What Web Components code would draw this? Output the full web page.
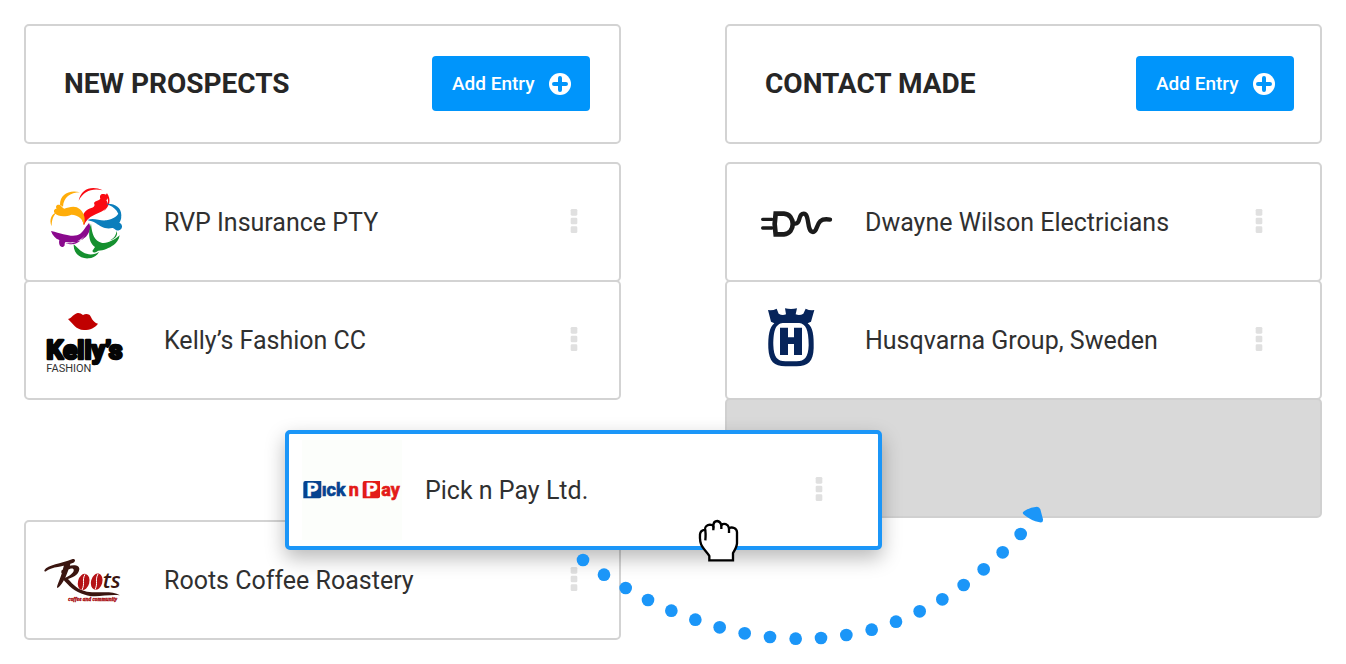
<!DOCTYPE html>
<html lang="en">
<head>
<meta charset="utf-8">
<meta name="viewport" content="width=device-width, initial-scale=1">
<title>Sales pipeline</title>
<style>
  body { margin: 0; background: #fff; color: #2b2b2b; font-family: Roboto, "Liberation Sans", sans-serif; }
</style>
</head>
<body>
<pipeline-board>
  <pipeline-column heading="New Prospects" class="first">
    <prospect-card name="RVP Insurance PTY" logo="rvp"></prospect-card>
    <prospect-card name="Kelly’s Fashion CC" logo="kellys"></prospect-card>
    <card-gap></card-gap>
    <prospect-card name="Roots Coffee Roastery" logo="roots"></prospect-card>
  </pipeline-column>
  <pipeline-column heading="Contact Made" class="second">
    <prospect-card name="Dwayne Wilson Electricians" logo="dwayne"></prospect-card>
    <prospect-card name="Husqvarna Group, Sweden" logo="husqvarna"></prospect-card>
    <card-gap target></card-gap>
  </pipeline-column>
  <prospect-card slot="dragged" name="Pick n Pay Ltd." logo="picknpay" dragging></prospect-card>
  <drag-trail slot="trail"></drag-trail>
</pipeline-board>

<template id="board">
  <style>
    :host { display: block; position: relative; padding: 24px; }
    .columns { display: grid; grid-template-columns: 1fr 1fr; gap: 104px; align-items: start; }
    ::slotted([slot="dragged"]) { position: absolute; left: 285px; top: 430px; width: calc(50% - 76px); }
    ::slotted([slot="trail"]) { position: absolute; left: 570px; top: 500px; }
  </style>
  <main class="columns"><slot></slot></main>
  <slot name="dragged"></slot>
  <slot name="trail"></slot>
</template>

<template id="column">
  <style>
    :host { display: block; min-width: 0; --kebab-inset: 57px; --button-inset: 26px; }
    :host(.first) { --kebab-inset: 41px; --button-inset: 29px; }
    header { box-sizing: border-box; min-height: 120px; display: flex; align-items: center; justify-content: space-between;
      padding: 0 var(--button-inset) 1px 38px; border: 2px solid #d3d3d3; border-radius: 5px; }
    h2 { margin: 0; font-size: 28px; line-height: 32px; font-weight: 700; color: #262626; text-transform: uppercase; }
    .cards { display: flex; flex-direction: column; margin-top: 18px; }
  </style>
  <section>
    <header><h2></h2><add-button>Add Entry</add-button></header>
    <div class="cards"><slot></slot></div>
  </section>
</template>

<template id="add">
  <style>
    :host { display: block; }
    button { display: flex; align-items: center; gap: 12px; height: 55px; padding: 0 19px 0 20px; border: 0; border-radius: 4px;
      background: #0095fb; color: #fff; font: 500 19px/24px Roboto, "Liberation Sans", sans-serif; cursor: pointer; min-width: 158px; justify-content: space-between; }
    svg { display: block; }
  </style>
  <button type="button"><span><slot></slot></span>
    <svg width="22" height="22" viewBox="0 0 22 22" aria-hidden="true"><circle cx="11" cy="11" r="11" fill="#fff"/><path d="M11 5v12M5 11h12" stroke="#0095fb" stroke-width="4" stroke-linecap="round"/></svg>
  </button>
</template>

<template id="card">
  <style>
    :host { display: block; }
    article { box-sizing: border-box; height: 120px; display: flex; align-items: center; gap: 23px;
      padding: 0 var(--kebab-inset, 59px) 0 15px; background: #fff; border: 2px solid #d3d3d3; border-radius: 5px; }
    :host(:not([dragging])) { margin-bottom: -2px; }
    :host([dragging]) article { border: 4px solid #1b96f8; padding: 0 55px 0 13px; box-shadow: 0 8px 20px rgba(0, 0, 0, .28); }
    .logo { flex: none; width: 100px; height: 100px; }
    .logo svg { display: block; width: 100px; height: 100px; }
    h3 { flex: 1; margin: 0; padding-top: 2px; font-size: 25px; line-height: 32px; font-weight: 400; color: #303030; white-space: nowrap; }
    button { display: block; flex: none; width: 8px; height: 24px; margin-bottom: 2px; padding: 0; border: 0; background: none; cursor: pointer; }
    button svg { display: block; }
  </style>
  <article>
    <div class="logo"></div>
    <h3></h3>
    <button type="button" aria-label="More options">
      <svg width="8" height="24" viewBox="0 0 24 72" fill="#e0e0e0"><rect x="2" y="0" width="20" height="20" rx="4"/><rect x="2" y="26" width="20" height="20" rx="4"/><rect x="2" y="52" width="20" height="20" rx="4"/></svg>
    </button>
  </article>
</template>

<template id="gap">
  <style>
    :host { display: block; box-sizing: border-box; height: 120px; margin: 2px 0 0; }
    :host([target]) { margin: 0; background: #d9d9d9; border: 2px solid #d0d0d0; border-radius: 5px; }
  </style>
</template>

<template id="trail">
  <style>:host { display: block; pointer-events: none; } svg { display: block; }</style>
  <svg width="480" height="150" viewBox="0 0 1440 450" aria-hidden="true">
    <g class="dots" fill="#1b96f8"></g>
    <path d="M1363 33Q1380 22 1401 20Q1408 20 1411 28L1419 58Q1420 69 1409 67Q1382 61 1362 44Q1354 38 1363 33Z" fill="#1b96f8"/>
    <path d="M418 181V168C414 160 403 150 397 140C390 130 389 119 390 103C391 94 398 90 405 89C404 80 412 75 420 74Q426 74 430 78C430 68 434 63 442 63Q451 64 454 75C462 68 474 72 477 84C487 80 500 84 501 96V130C500 142 494 151 489 159V181Z" fill="#fff" stroke="#000" stroke-width="7"/>
    <path d="M405 88Q408 98 406 121M430 77V91M454 74V87M477 83V99" fill="none" stroke="#000" stroke-width="7"/>
  </svg>
</template>

<template id="logo-rvp">
  <svg viewBox="-15 -36 300 300" role="img" aria-label="RVP Insurance">
    <path fill="#fa0a12" d="M114 124C107 108 107 91 122 79C134 70 151 72 144 57C148 49 158 51 163 44C159 32 167 27 177 31C187 35 187 43 181 49C188 59 186 69 174 78C157 91 125 93 114 124ZM183 28C196 46 192 68 172 82C188 67 190 48 180 31ZM98 50C105 15 137 3 170 19C138 12 113 21 98 50Z"/>
    <path fill="#ffad0a" d="M113 124C112 106 98 93 76 92C59 99 36 99 26 87C21 79 26 74 32 74C27 66 33 60 42 63C47 66 49 72 55 74C68 70 88 62 102 76C117 90 119 108 113 124ZM42 62C42 31 70 16 102 25C72 26 53 40 51 68ZM17 127C8 107 17 89 31 86C20 98 17 110 17 127Z"/>
    <path fill="#8a098d" d="M129 117C115 132 110 149 93 154C72 159 50 149 15 141C19 154 28 164 40 168C37 180 43 192 52 188C59 185 54 179 58 174C85 179 112 170 124 153C134 139 135 129 129 117ZM57 176C83 184 107 167 117 153C99 181 80 186 57 176Z"/>
    <path fill="#15902f" d="M135 119C124 150 130 178 147 189L139 201C145 210 151 203 157 200C172 200 190 192 203 183C211 177 219 168 221 154C205 168 182 181 166 176C146 169 138 153 135 119ZM83 181C82 208 102 225 128 223C142 222 154 214 159 203C147 213 126 214 111 205C99 198 94 190 83 181ZM212 141C217 155 207 166 187 171C203 165 209 157 212 141Z"/>
    <path fill="#0b7ebc" d="M124 108C144 99 161 112 181 109C204 105 216 95 221 82C228 94 227 107 220 116C232 121 230 136 219 139C208 142 206 131 199 132C178 137 163 127 150 118C141 112 134 111 124 108ZM180 60C203 57 226 69 226 94C226 104 222 111 219 114C223 88 209 69 180 60Z"/>
  </svg>
</template>
<template id="logo-kellys">
  <svg viewBox="15 -30 300 300" role="img" aria-label="Kelly's Fashion">
    <path fill="#c00000" d="M96 57C109 53 112 42 125 39Q133 38 141 45Q150 39 160 44C166 48 168 66 186 71C177 83 163 90 144 90C119 89 112 72 96 57Z"/>
    <text x="31" y="178" font-family="Roboto, sans-serif" font-size="80" font-weight="700" fill="#050505" stroke="#050505" stroke-width="8" stroke-linejoin="round">Kelly’s</text>
    <text x="31" y="215" font-family="Roboto, sans-serif" font-size="33" fill="#333">FASHION</text>
  </svg>
</template>
<template id="logo-roots">
  <svg viewBox="15 -60 300 300" role="img" aria-label="Roots coffee and community">
    <path fill="#3a1510" d="M25 61C35 44 76 41 108 28C117 24 121 34 112 38C79 51 48 50 32 62Q25 68 25 61ZM105 35C98 60 84 101 65 114C58 112 73 91 81 56L84 46ZM76 62C97 42 131 41 130 58C128 76 107 84 96 87C112 104 125 120 153 125C190 131 226 120 252 136C212 132 178 145 147 134C116 126 96 105 80 86C103 79 118 64 112 57C105 52 91 62 76 70Z"/>
    <g fill="#b51217"><ellipse cx="143" cy="96" rx="17" ry="25" transform="rotate(15 143 96)"/><ellipse cx="182" cy="95" rx="17" ry="25" transform="rotate(15 182 95)"/></g>
    <path d="M147 73C137 91 148 98 138 120M186 72C176 91 187 98 177 119" fill="none" stroke="#fff" stroke-width="3"/>
    <text x="200" y="115" font-family="'Open Sans', sans-serif" font-size="66" font-style="italic" font-weight="600" fill="#3a1510">ts</text>
    <text x="97" y="153" font-family="'Liberation Serif', serif" font-size="16" font-style="italic" font-weight="700" fill="#a7080c" stroke="#a7080c">coffee and community</text>
  </svg>
</template>
<template id="logo-dwayne">
  <svg viewBox="-24 -54 300 300" role="img" aria-label="Dwayne Wilson">
    <g fill="none" stroke="#1b1b1b" stroke-linecap="round"><path d="M38 88H66M38 114H66" stroke-width="10"/><path d="M77 71H102C137 73 137 131 102 133H77L74 102Z" stroke-width="14"/><path d="M135 101C154 103 142 71 161 71C180 71 169 126 189 126C207 126 193 80 240 89" stroke-width="13"/></g>
  </svg>
</template>
<template id="logo-husqvarna">
  <svg viewBox="-39 -30 300 300" role="img" aria-label="Husqvarna">
    <path fill="#06245a" fill-rule="evenodd" d="M39 30Q53 32 65 26L71 41Q82 48 93 43L90 25Q108 29 126 25L122 43Q134 48 145 41L152 26Q164 32 178 30L168 65L158 70C174 82 177 107 176 145C175 184 159 199 125 199H91C57 199 42 184 40 145C39 107 43 82 58 70L48 65ZM83 69C63 72 55 88 55 136C56 171 67 184 91 184H125C149 184 160 171 161 136C161 88 152 72 133 69Z"/>
    <path fill="#06245a" d="M75 83H99V112H117V83H141V165H117V132H99V165H75Z"/>
  </svg>
</template>
<template id="logo-picknpay">
  <svg viewBox="66 45 300 300" role="img" aria-label="Pick n Pay">
    <rect x="66" y="45" width="300" height="300" fill="#fcfefb"/>
    <path fill="#064390" d="M76 168H124V214Q124 220 118 220H70V174Q70 168 76 168Z"/>
    <path fill="#e31b18" d="M254 168H300V214Q300 220 294 220H248V174Q248 168 254 168Z"/>
    <g font-family="Roboto, sans-serif" font-weight="700" font-size="54" stroke-width="2">
      <text x="80" y="214" fill="#fff" stroke="#fff">P</text><text x="258" y="214" fill="#fff" stroke="#fff">P</text>
      <text x="125" y="213" fill="#064390" stroke="#064390">ıck</text><text x="206" y="213" fill="#e31b18" stroke="#e31b18">n</text><text x="304" y="213" fill="#e31b18" stroke="#e31b18">ay</text></g>
  </svg>
</template>

<script>
  const stamp = (host, id) => {
    const root = host.attachShadow({ mode: "open" });
    root.append(document.getElementById(id).content.cloneNode(true));
    return root;
  };
  customElements.define("add-button", class extends HTMLElement {
    constructor() { super(); stamp(this, "add"); }
  });
  customElements.define("card-gap", class extends HTMLElement {
    constructor() { super(); stamp(this, "gap"); }
  });
  customElements.define("prospect-card", class extends HTMLElement {
    connectedCallback() {
      if (this.shadowRoot) return;
      const root = stamp(this, "card");
      root.querySelector("h3").textContent = this.getAttribute("name");
      const logo = document.getElementById("logo-" + this.getAttribute("logo"));
      root.querySelector(".logo").append(logo.content.cloneNode(true));
    }
  });
  customElements.define("pipeline-column", class extends HTMLElement {
    connectedCallback() {
      if (this.shadowRoot) return;
      stamp(this, "column").querySelector("h2").textContent = this.getAttribute("heading");
    }
  });
  customElements.define("drag-trail", class extends HTMLElement {
    constructor() {
      super();
      const dots = stamp(this, "trail").querySelector(".dots");
      const points = [[39,180],[102,224],[167,264],[234,300],[304,332],[376,359],[449,382],[524,400],[600,411],[677,416],
        [753,414],[829,405],[905,389],[978,365],[1049,334],[1117,298],[1181,255],[1241,208],[1298,157],[1352,102]];
      for (const [x, y] of points) {
        const dot = document.createElementNS("http://www.w3.org/2000/svg", "circle");
        dot.setAttribute("cx", x); dot.setAttribute("cy", y); dot.setAttribute("r", 19);
        dots.append(dot);
      }
    }
  });
  customElements.define("pipeline-board", class extends HTMLElement {
    constructor() { super(); stamp(this, "board"); }
  });
</script>
</body>
</html>
